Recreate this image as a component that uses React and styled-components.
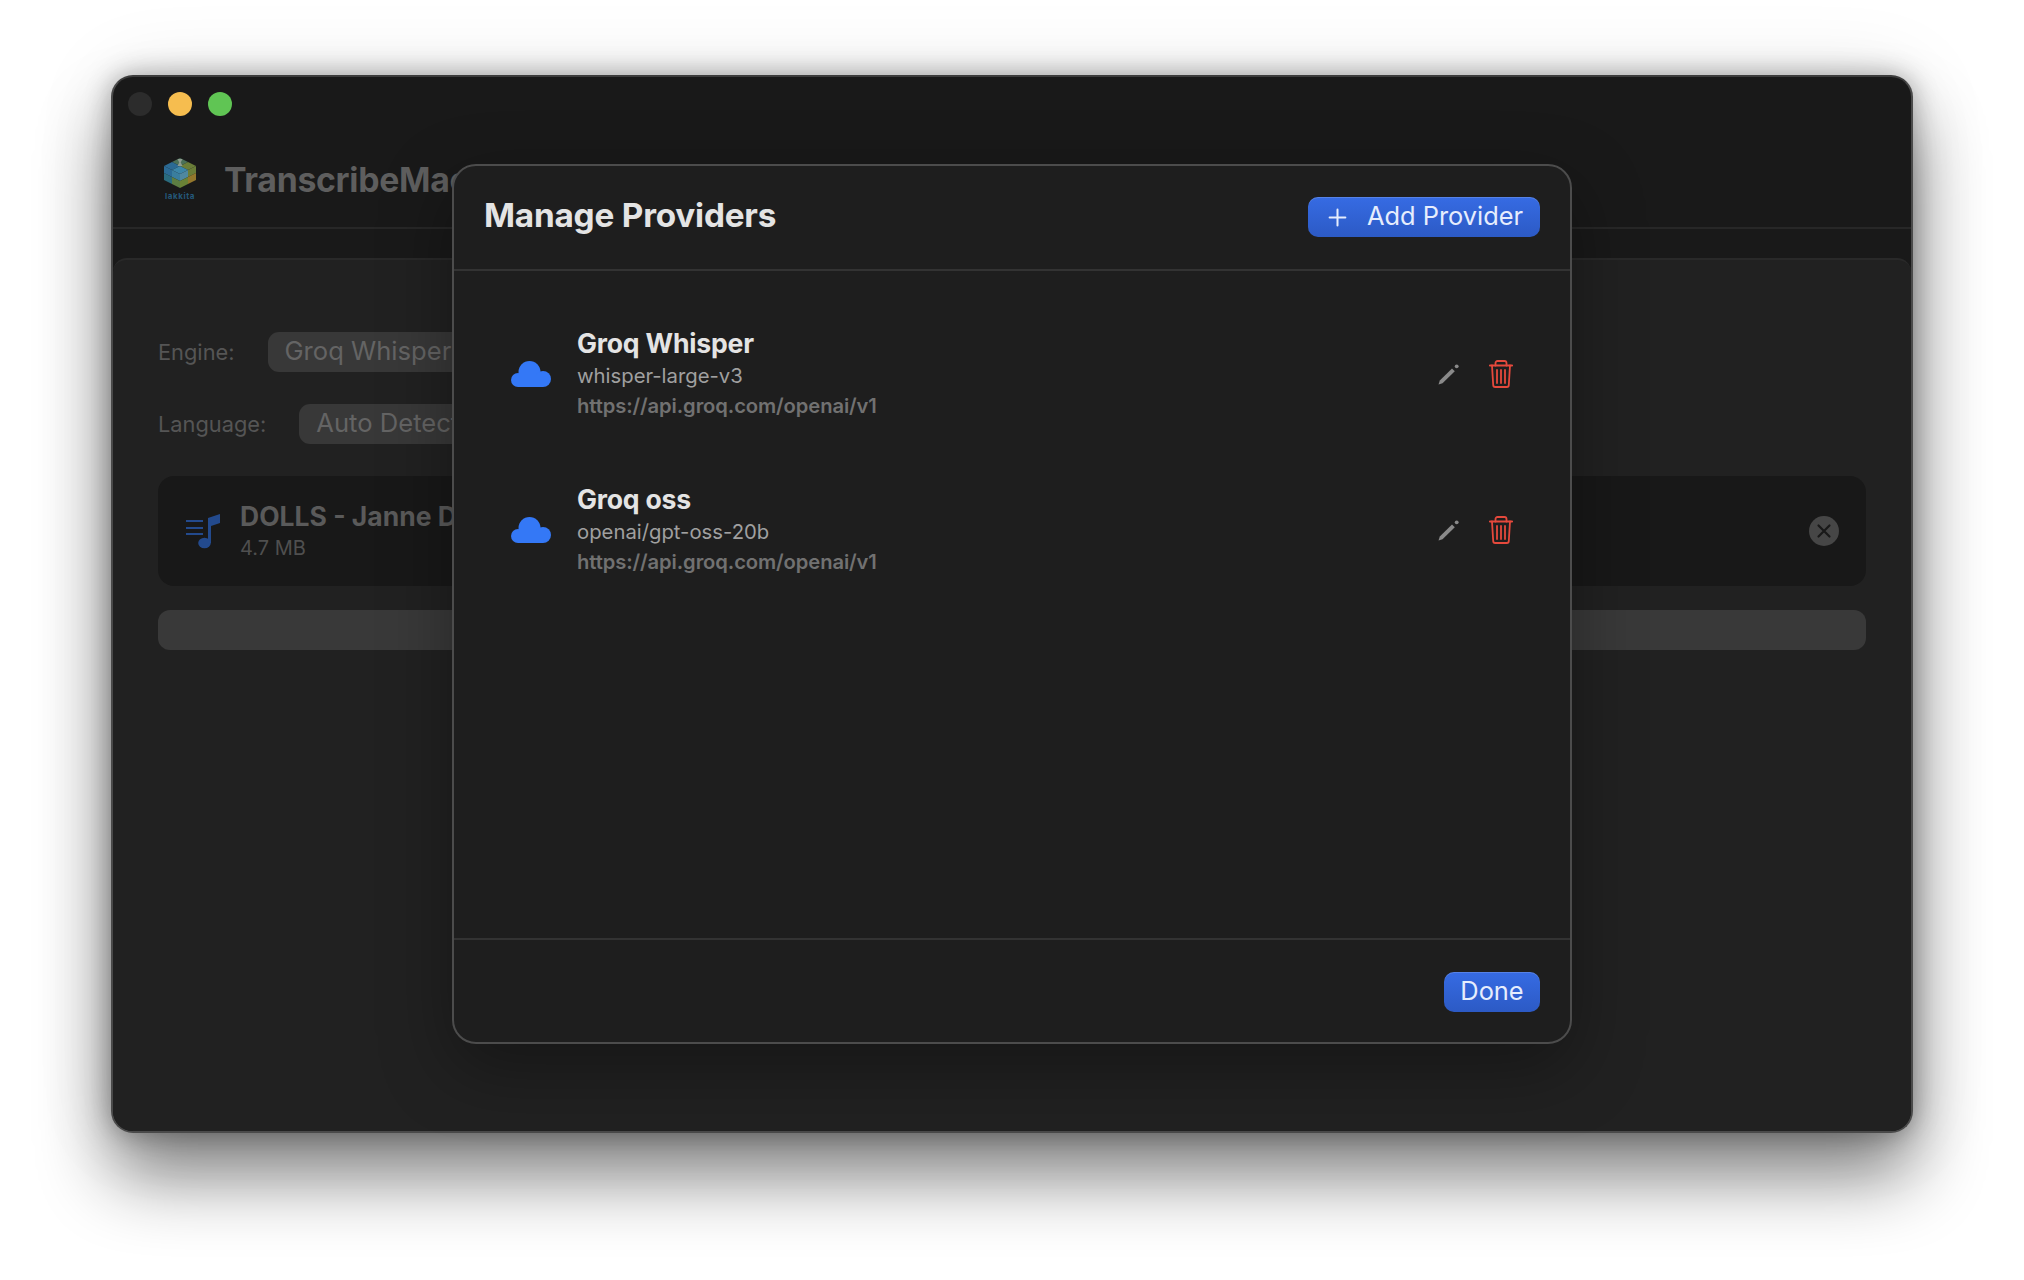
import styled, { createGlobalStyle } from 'styled-components';
import { Plus } from 'lucide-react';

const GlobalStyle = createGlobalStyle`
  html, body {
    margin: 0;
    padding: 0;
    background: #ffffff;
  }
  * {
    box-sizing: border-box;
  }
`;

const providers = [
  { name: 'Groq Whisper', model: 'whisper-large-v3', url: 'https://api.groq.com/openai/v1' },
  { name: 'Groq oss', model: 'openai/gpt-oss-20b', url: 'https://api.groq.com/openai/v1' },
];

const CloudIcon = () => (
  <svg width="40" height="26" viewBox="0 0 40 26" fill="#3478f6">
    <circle cx="7" cy="19" r="7" />
    <circle cx="18.5" cy="11" r="11" />
    <circle cx="32" cy="18" r="8" />
    <rect x="7" y="14" width="25" height="12" />
  </svg>
);

const PencilIcon = () => (
  <svg width="21" height="21" viewBox="0 0 21 21">
    <path d="M0.5 20.5l1.3-4L14 4.4l2.8 2.8L4.5 19.3z" fill="#8a8a8a" />
    <circle cx="18.7" cy="2.3" r="1.9" fill="#8a8a8a" />
  </svg>
);

const TrashIcon = () => (
  <svg width="24" height="28" viewBox="0 0 24 28" fill="none" stroke="#e5493c" strokeWidth="1.8" strokeLinecap="round">
    <path d="M0.8 5.5h22.4" />
    <path d="M6.5 5.5V3a2 2 0 0 1 2-2h7a2 2 0 0 1 2 2v2.5" />
    <path d="M3 5.5l1.2 19.5a2 2 0 0 0 2 2h11.6a2 2 0 0 0 2-2L21 5.5" />
    <path d="M8 10v13M12 10v13M16 10v13" />
  </svg>
);

const MusicIcon = () => (
  <svg width="34" height="35" viewBox="0 0 34 35" fill="#234a8d">
    <rect x="0" y="6" width="17" height="2" />
    <rect x="0" y="13" width="17" height="2" />
    <rect x="0" y="19" width="17" height="2" />
    <path d="M22 4L34 0v9l-9 3v17h-3z" />
    <ellipse cx="18.5" cy="29" rx="6.3" ry="5.2" />
  </svg>
);

const cubeFaces = [
  ['16,0 24,4 16,8 8,4', '#4a7058'],
  ['8,4 16,8 8,12 0,8', '#2b6a94'],
  ['24,4 32,8 24,12 16,8', '#6a7d38'],
  ['16,8 24,12 16,16 8,12', '#3c86a8'],
  ['0,8 8,12 8,19 0,15', '#2b6a94'],
  ['8,12 16,16 16,23 8,19', '#3a7e9e'],
  ['16,16 24,12 24,19 16,23', '#4f88a0'],
  ['24,12 32,8 32,15 24,19', '#6a7d38'],
  ['0,15 8,19 8,26 0,22', '#2a6b7e'],
  ['8,19 16,23 16,30 8,26', '#5c7d42'],
  ['16,23 24,19 24,26 16,30', '#6a8236'],
  ['24,19 32,15 32,22 24,26', '#93772c'],
];

const LogoIcon = () => (
  <Logo>
    <svg width="32" height="30" viewBox="0 0 32 30">
      {cubeFaces.map(([points, color]) => (
        <polygon key={points} points={points} fill={color} />
      ))}
      <path d="M13.5 1h5l-1.8 3.5 1.8 3.5h-5l1.8-3.5z" fill="#8e9a8e" />
    </svg>
    <LogoText>lakkita</LogoText>
  </Logo>
);

const App = () => (
  <Page>
    <GlobalStyle />
    <Window>
      <TitleBar>
        <Light $color="#2c2c2c" />
        <Light $color="#f6bd4f" />
        <Light $color="#60c554" />
      </TitleBar>
      <AppHeader>
        <LogoIcon />
        <AppTitle>TranscribeMac</AppTitle>
      </AppHeader>
      <Content>
        <FieldRow>
          <FieldLabel>Engine:</FieldLabel>
          <SelectBox>Groq Whisper</SelectBox>
        </FieldRow>
        <FieldRow>
          <FieldLabel>Language:</FieldLabel>
          <SelectBox>Auto Detect</SelectBox>
        </FieldRow>
        <FileCard>
          <MusicIcon />
          <FileInfo>
            <FileName>DOLLS - Janne Da Arc</FileName>
            <FileSize>4.7 MB</FileSize>
          </FileInfo>
          <RemoveButton>
            <svg width="16" height="16" viewBox="0 0 16 16" stroke="#191919" strokeWidth="2.2" strokeLinecap="round">
              <path d="M2.5 2.5l11 11M13.5 2.5l-11 11" />
            </svg>
          </RemoveButton>
        </FileCard>
        <ProgressTrack />
      </Content>
      <Modal>
        <ModalHeader>
          <ModalTitle>Manage Providers</ModalTitle>
          <AddButton>
            <Plus size={27} strokeWidth={1.8} />
            <ButtonLabel>Add Provider</ButtonLabel>
          </AddButton>
        </ModalHeader>
        <ProviderList>
          {providers.map((p) => (
            <ProviderRow key={p.name}>
              <CloudIcon />
              <ProviderInfo>
                <ProviderName>{p.name}</ProviderName>
                <ProviderModel>{p.model}</ProviderModel>
                <ProviderUrl>{p.url}</ProviderUrl>
              </ProviderInfo>
              <RowActions>
                <PencilIcon />
                <TrashIcon />
              </RowActions>
            </ProviderRow>
          ))}
        </ProviderList>
        <ModalFooter>
          <DoneButton>
            <ButtonLabel>Done</ButtonLabel>
          </DoneButton>
        </ModalFooter>
      </Modal>
    </Window>
  </Page>
);

export default App;

const Page = styled.div`
  width: 2024px;
  height: 1280px;
  padding: 75px 111px 147px;
  overflow: hidden;
  font-family: Inter, 'Liberation Sans', sans-serif;
`;

const Window = styled.div`
  position: relative;
  height: 1058px;
  display: flex;
  flex-direction: column;
  background: #191919;
  border: 2px solid #4a4a4a;
  border-top-color: #3c3c3c;
  border-radius: 22px;
  box-shadow: 0 44px 72px rgba(0, 0, 0, 0.48), 0 0 26px rgba(0, 0, 0, 0.3), 0 0 80px rgba(0, 0, 0, 0.1);
`;

const TitleBar = styled.div`
  display: flex;
  gap: 16px;
  padding: 15px 15px 0;
`;

const Light = styled.span`
  width: 24px;
  height: 24px;
  border-radius: 50%;
  background: ${(p) => p.$color};
`;

const AppHeader = styled.div`
  height: 113px;
  display: flex;
  align-items: center;
  gap: 28px;
  padding: 15px 0 0 51px;
  border-bottom: 2px solid #272727;
`;

const Logo = styled.div`
  display: flex;
  flex-direction: column;
  align-items: center;
  gap: 3px;
`;

const LogoText = styled.span`
  font-size: 8px;
  line-height: 10px;
  font-weight: 700;
  letter-spacing: 0.6px;
  color: #24587a;
`;

const AppTitle = styled.div`
  font-size: 33.8px;
  font-weight: 700;
  letter-spacing: -0.3px;
  color: #5e5e5e;
`;

const Content = styled.div`
  flex: 1;
  margin: 29px 0 0;
  padding: 72px 45px 0;
  display: flex;
  flex-direction: column;
  background: #212121;
  border-top: 2px solid #292929;
  border-radius: 14px 14px 20px 20px;
`;

const FieldRow = styled.div`
  display: flex;
  align-items: center;
  gap: 33px;
  height: 40px;
  margin-bottom: 32px;
`;

const FieldLabel = styled.span`
  font-size: 21.8px;
  color: #555555;
`;

const SelectBox = styled.div`
  height: 40px;
  padding: 0 17px 3px;
  width: 280px;
  display: flex;
  align-items: center;
  font-size: 25.6px;
  color: #646464;
  background: #383838;
  border-radius: 11px;
`;

const FileCard = styled.div`
  height: 110px;
  display: flex;
  align-items: center;
  padding: 0 28px;
  gap: 20px;
  background: #181818;
  border-radius: 16px;
`;

const FileInfo = styled.div`
  flex: 1;
  display: flex;
  flex-direction: column;
  gap: 4px;
  margin-bottom: 2px;
`;

const FileName = styled.div`
  font-size: 26.5px;
  font-weight: 700;
  color: #5a5a5a;
`;

const FileSize = styled.div`
  font-size: 20px;
  color: #4f4f4f;
`;

const RemoveButton = styled.div`
  width: 30px;
  height: 30px;
  margin-right: -1px;
  border-radius: 50%;
  background: #464646;
  display: flex;
  align-items: center;
  justify-content: center;
`;

const ProgressTrack = styled.div`
  height: 40px;
  margin-top: 24px;
  background: #393939;
  border-radius: 12px;
`;

const Modal = styled.div`
  position: absolute;
  left: 339px;
  top: 87px;
  width: 1120px;
  height: 880px;
  display: flex;
  flex-direction: column;
  background: #1e1e1e;
  border: 2px solid #4c4c4c;
  border-radius: 24px;
  box-shadow: 0 24px 70px rgba(0, 0, 0, 0.34);
`;

const ModalHeader = styled.div`
  height: 105px;
  flex-shrink: 0;
  display: flex;
  align-items: center;
  justify-content: space-between;
  padding: 0 30px;
  border-bottom: 2px solid #333333;
`;

const ModalTitle = styled.h2`
  margin: 0 0 6px;
  font-size: 33.3px;
  font-weight: 700;
  letter-spacing: -0.2px;
  color: #e4e4e4;
`;

const BlueButton = styled.button`
  height: 40px;
  display: flex;
  align-items: center;
  border: 0;
  border-radius: 10px;
  background: linear-gradient(#366be3, #2c5ac5);
  box-shadow: inset 0 1px 0 rgba(255, 255, 255, 0.16);
  color: #e6edfd;
  font-family: inherit;
  font-size: 25.4px;
`;

const ButtonLabel = styled.span`
  margin-bottom: 4px;
`;

const AddButton = styled(BlueButton)`
  width: 232px;
  gap: 16px;
  margin-bottom: 1px;
  padding: 0 0 0 16px;
`;

const DoneButton = styled(BlueButton)`
  width: 96px;
  margin-top: 2px;
  justify-content: center;
`;

const ProviderList = styled.div`
  flex: 1;
  padding: 25px 57px;
  display: flex;
  flex-direction: column;
`;

const ProviderRow = styled.div`
  height: 156px;
  display: flex;
  align-items: center;
  gap: 26px;
`;

const ProviderInfo = styled.div`
  flex: 1;
  display: flex;
  flex-direction: column;
`;

const ProviderName = styled.div`
  font-size: 26.6px;
  line-height: 32px;
  margin-bottom: 2px;
  font-weight: 700;
  letter-spacing: -0.2px;
  color: #e4e4e4;
`;

const ProviderModel = styled.div`
  font-size: 20.3px;
  line-height: 30px;
  color: #a0a0a0;
`;

const ProviderUrl = styled.div`
  font-size: 20.2px;
  line-height: 30px;
  font-weight: 600;
  letter-spacing: -0.1px;
  color: #717171;
`;

const RowActions = styled.div`
  display: flex;
  align-items: center;
  gap: 30px;
`;

const ModalFooter = styled.div`
  height: 104px;
  flex-shrink: 0;
  display: flex;
  align-items: center;
  justify-content: flex-end;
  padding: 0 30px;
  border-top: 2px solid #333333;
`;
